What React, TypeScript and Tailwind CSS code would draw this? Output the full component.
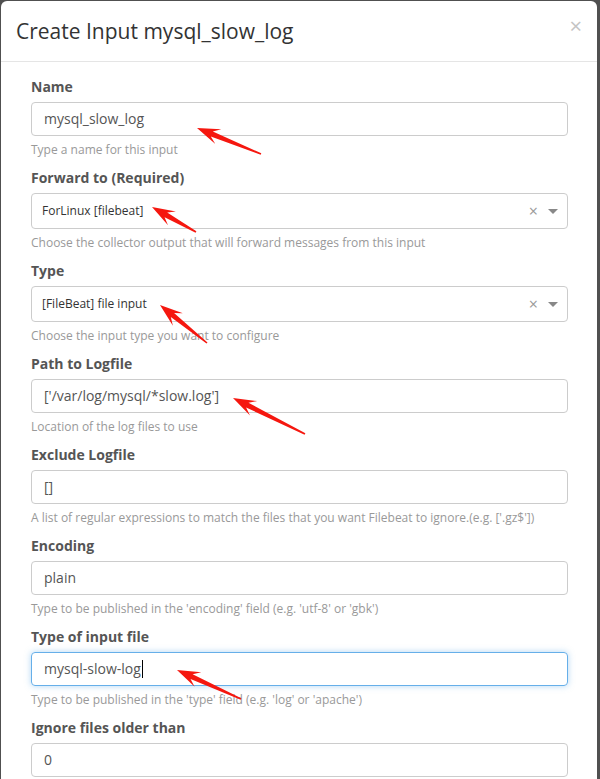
import React from 'react';

type Field = {
  label: string;
  value: string;
  help: string;
  kind: 'input' | 'select';
  focused?: boolean;
};

const fields: Field[] = [
  { label: 'Name', value: 'mysql_slow_log', help: 'Type a name for this input', kind: 'input' },
  {
    label: 'Forward to (Required)',
    value: 'ForLinux [filebeat]',
    help: 'Choose the collector output that will forward messages from this input',
    kind: 'select',
  },
  { label: 'Type', value: '[FileBeat] file input', help: 'Choose the input type you want to configure', kind: 'select' },
  { label: 'Path to Logfile', value: "['/var/log/mysql/*slow.log']", help: 'Location of the log files to use', kind: 'input' },
  {
    label: 'Exclude Logfile',
    value: '[]',
    help: "A list of regular expressions to match the files that you want Filebeat to ignore.(e.g. ['.gz$'])",
    kind: 'input',
  },
  { label: 'Encoding', value: 'plain', help: "Type to be published in the 'encoding' field (e.g. 'utf-8' or 'gbk')", kind: 'input' },
  {
    label: 'Type of input file',
    value: 'mysql-slow-log',
    help: "Type to be published in the 'type' field (e.g. 'log' or 'apache')",
    kind: 'input',
    focused: true,
  },
  { label: 'Ignore files older than', value: '0', help: '', kind: 'input' },
];

// red annotation arrows: [tipX, tipY, tailX, tailY]
const arrows: [number, number, number, number][] = [
  [197, 128, 261, 154],
  [152, 207, 196, 232],
  [160, 305, 207, 343],
  [233, 398, 305, 434],
  [177, 670, 241, 699],
];

function arrowPoints([tx, ty, sx, sy]: [number, number, number, number]) {
  const len = Math.hypot(tx - sx, ty - sy);
  const dx = (tx - sx) / len;
  const dy = (ty - sy) / len;
  const nx = -dy;
  const ny = dx;
  const L = 23;
  const W = 8;
  const N = 16;
  const w = 2.6;
  const pts = [
    [tx, ty],
    [tx - dx * L + nx * W, ty - dy * L + ny * W],
    [tx - dx * N + nx * w, ty - dy * N + ny * w],
    [sx + nx * 0.8, sy + ny * 0.8],
    [sx - nx * 0.8, sy - ny * 0.8],
    [tx - dx * N - nx * w, ty - dy * N - ny * w],
    [tx - dx * L - nx * W, ty - dy * L - ny * W],
  ];
  return pts.map((p) => p.map((v) => v.toFixed(1)).join(',')).join(' ');
}

const App = () => {
  return (
    <div className="relative h-[779px] w-[600px] overflow-hidden bg-[#505050] pl-px pr-[3px] pt-px font-['Open_Sans',sans-serif]">
      <div className="h-full rounded-t-[6px] bg-white">
        {/* Header */}
        <div className="relative flex h-[61px] items-center border-b border-[#e5e5e5] pl-[15px]">
          <h4 className="text-[21px] leading-none text-[#333]">Create Input mysql_slow_log</h4>
          <span className="absolute right-[15px] top-[13px] text-[22px] leading-none text-[#c4c4c4]">×</span>
        </div>

        {/* Body */}
        <div className="pl-[30px] pr-[29px] pt-[15px]">
          {fields.map((f, i) => (
            <div key={i} className="flex flex-col">
              <label className="mb-[5px] text-sm font-bold leading-5 text-[#555]">{f.label}</label>
              {f.kind === 'select' ? (
                <div className="flex h-9 items-center rounded-[4px] border border-[#ccc] pl-[10px] pr-[9px]">
                  <span className="flex-1 text-[12px] text-[#333]">{f.value}</span>
                  <span className="mr-[10px] text-[16px] leading-none text-[#999]">×</span>
                  <span className="h-0 w-0 border-l-[5px] border-r-[5px] border-t-[5px] border-l-transparent border-r-transparent border-t-[#888]" />
                </div>
              ) : (
                <div
                  className={
                    f.focused
                      ? 'flex h-[34px] items-center rounded-[4px] border border-[#66afe9] px-3 shadow-[0_0_6px_rgba(102,175,233,0.5)]'
                      : 'flex h-[34px] items-center rounded-[4px] border border-[#ccc] px-3'
                  }
                >
                  <span className="text-sm text-[#555]">{f.value}</span>
                  {f.focused && <span className="ml-px h-[18px] w-px bg-black" />}
                </div>
              )}
              {f.help && (
                <p className="mb-[10px] mt-[5px] text-xs leading-[17px] text-[#999]">{f.help}</p>
              )}
            </div>
          ))}
        </div>
      </div>

      {/* annotation arrows */}
      <svg className="pointer-events-none absolute left-0 top-0" width="600" height="779">
        {arrows.map((a, i) => (
          <polygon key={i} points={arrowPoints(a)} fill="#f5170f" />
        ))}
      </svg>
    </div>
  );
};

export default App;
